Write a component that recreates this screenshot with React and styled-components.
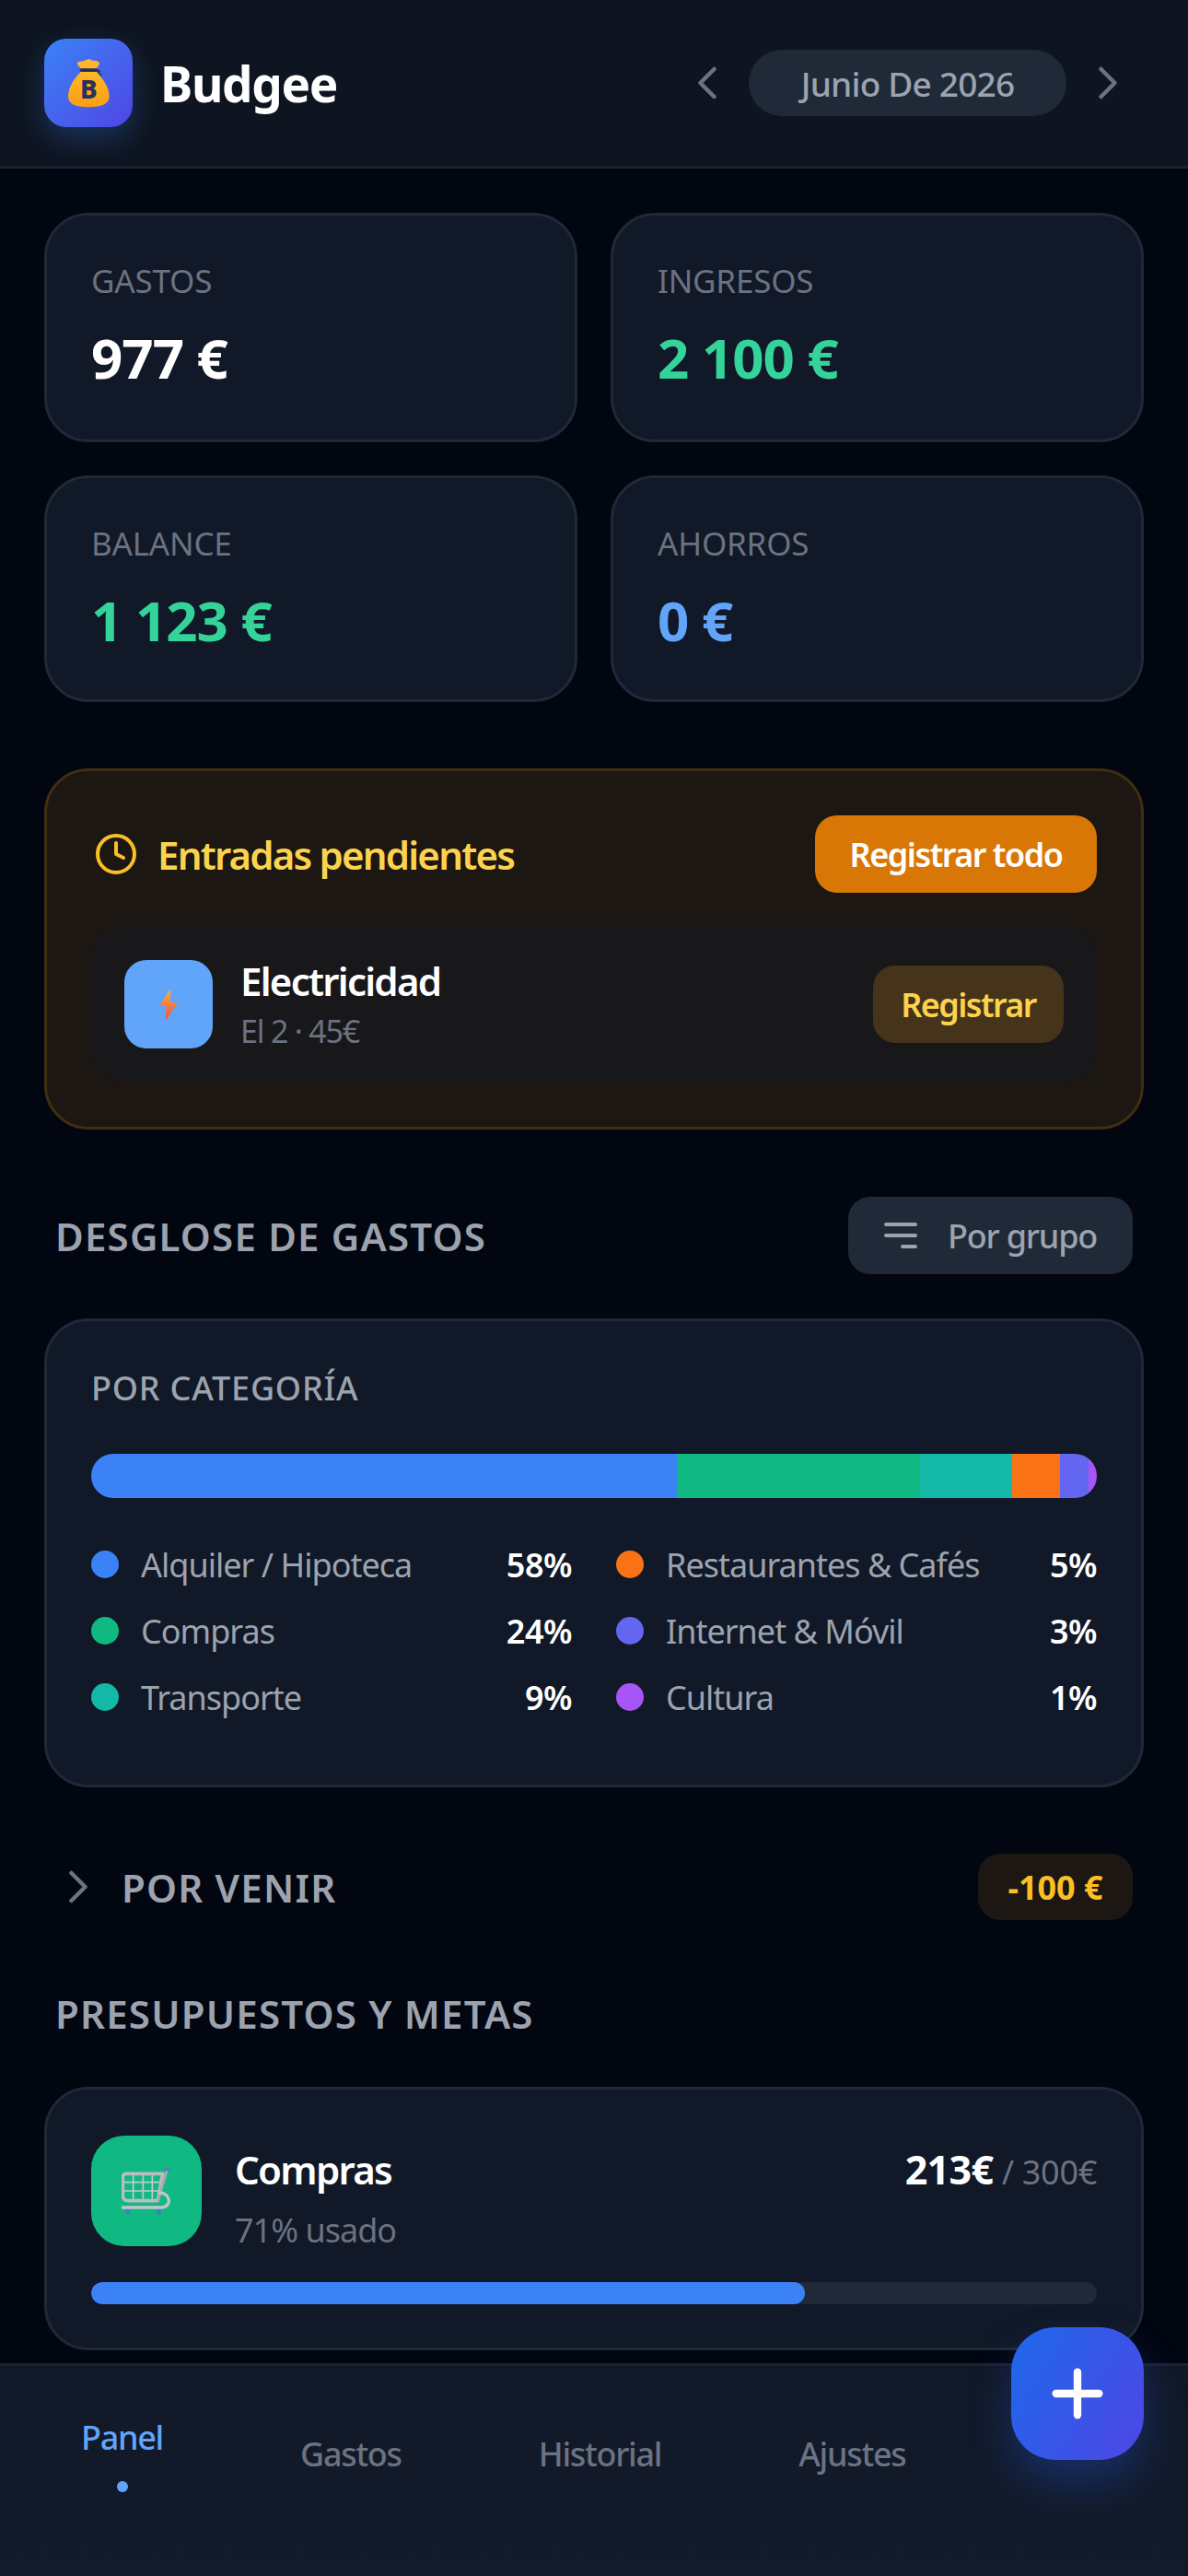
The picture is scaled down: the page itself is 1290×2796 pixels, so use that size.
import React from 'react';
import styled, { createGlobalStyle } from 'styled-components';
import { ChevronLeft, ChevronRight, Clock, Plus } from 'lucide-react';

const Global = createGlobalStyle`
  html, body { margin: 0; padding: 0; background: #020611; }
  * { box-sizing: border-box; }
  body { font-family: "Noto Sans", "Open Sans", sans-serif; }
`;

const Screen = styled.div`
  position: relative;
  width: 1290px;
  height: 2796px;
  display: flex;
  flex-direction: column;
  overflow: hidden;
  background: #020611;
`;

const Header = styled.header`
  flex: none;
  height: 183px;
  padding: 0 48px;
  display: flex;
  align-items: center;
  justify-content: space-between;
  background: #0e1521;
  border-bottom: 3px solid #1a2230;
`;

const Brand = styled.div`
  display: flex;
  align-items: center;
  gap: 30px;
`;

const LogoTile = styled.div`
  width: 96px;
  height: 96px;
  border-radius: 24px;
  display: flex;
  align-items: center;
  justify-content: center;
  background: linear-gradient(135deg, #3b82f6, #4f46e5);
  box-shadow: 0 12px 30px rgba(59, 130, 246, 0.28);
`;

const BrandName = styled.h1`
  margin: 0;
  font-size: 53px;
  font-weight: 700;
  color: #ffffff;
  letter-spacing: -1.3px;
`;

const MonthPager = styled.div`
  display: flex;
  align-items: center;
  gap: 15px;
  margin-right: 9px;
  color: #6b7280;
`;

const MonthPill = styled.div`
  width: 345px;
  height: 72px;
  border-radius: 36px;
  background: #1f2937;
  color: #9ca3af;
  font-size: 37px;
  font-weight: 500;
  letter-spacing: -0.8px;
  display: flex;
  align-items: center;
  justify-content: center;
`;

const Content = styled.main`
  flex: 1;
  min-height: 0;
  padding: 48px 48px 0;
  display: flex;
  flex-direction: column;
`;

const StatGrid = styled.section`
  display: grid;
  grid-template-columns: 1fr 1fr;
  grid-template-rows: 249px 246px;
  gap: 36px;
`;

const Card = styled.div`
  background: #111827;
  border: 3px solid #1f2937;
  border-radius: 48px;
`;

const StatCard = styled(Card)`
  padding: 48px 48px 0;
`;

const StatLabel = styled.div`
  font-size: 35px;
  line-height: 46px;
  letter-spacing: -0.2px;
  color: #6b7280;
  text-transform: uppercase;
`;

const StatValue = styled.div`
  margin-top: 21px;
  font-size: 60px;
  line-height: 78px;
  font-weight: 700;
  letter-spacing: -1px;
  color: ${p => p.$color};
`;

const PendingPanel = styled.section`
  margin-top: 72px;
  height: 392px;
  padding: 48px;
  background: #1c1712;
  border: 3px solid #402e12;
  border-radius: 48px;
`;

const PendingHead = styled.div`
  display: flex;
  align-items: center;
  justify-content: space-between;
`;

const PendingTitle = styled.div`
  display: flex;
  align-items: center;
  gap: 21px;
  padding-left: 3px;
  font-size: 42px;
  font-weight: 600;
  letter-spacing: -1.8px;
  color: #fcd34d;
  svg { color: #fbbf24; }
`;

const SolidButton = styled.button`
  height: 84px;
  width: 306px;
  border: 0;
  border-radius: 24px;
  background: #d97706;
  color: #fff;
  font: 600 36px "Noto Sans", sans-serif;
  letter-spacing: -1.5px;
`;

const PendingItem = styled.div`
  margin-top: 36px;
  height: 170px;
  padding: 0 36px;
  border-radius: 36px;
  background: #18181b;
  display: flex;
  align-items: center;
`;

const IconTile = styled.div`
  flex: none;
  width: ${p => p.$size}px;
  height: ${p => p.$size}px;
  border-radius: ${p => p.$radius}px;
  background: ${p => p.$bg};
  display: flex;
  align-items: center;
  justify-content: center;
`;

const ItemText = styled.div`
  flex: 1;
  margin-left: 30px;
  margin-top: -3px;
`;

const ItemName = styled.div`
  font-size: 42px;
  line-height: 54px;
  font-weight: 600;
  letter-spacing: -1.75px;
  color: #fff;
`;

const ItemMeta = styled.div`
  margin-top: 6px;
  font-size: 34px;
  line-height: 42px;
  letter-spacing: -1.2px;
  color: #6b7280;
`;

const SoftButton = styled.button`
  width: 207px;
  height: 84px;
  border: 0;
  border-radius: 24px;
  background: #45331a;
  color: #fcd34d;
  font: 600 36px "Noto Sans", sans-serif;
  letter-spacing: -1.6px;
`;

const SectionHead = styled.div`
  margin-top: 73px;
  padding: 0 12px;
  display: flex;
  align-items: center;
  justify-content: space-between;
`;

const SectionTitle = styled.h2`
  margin: 0;
  font-size: 42px;
  font-weight: 600;
  letter-spacing: 1.2px;
  color: #9ca3af;
  text-transform: uppercase;
`;

const GroupButton = styled.button`
  width: 309px;
  height: 84px;
  border: 0;
  border-radius: 24px;
  background: #1f2937;
  color: #9ca3af;
  font: 500 36px "Noto Sans", sans-serif;
  letter-spacing: -1.2px;
  display: flex;
  align-items: center;
  justify-content: center;
  gap: 33px;
  padding-left: 6px;
`;

const BreakdownCard = styled(Card)`
  margin-top: 48px;
  height: 509px;
  padding: 51px 48px 0;
`;

const CardTitle = styled.div`
  font-size: 36px;
  line-height: 44px;
  font-weight: 500;
  letter-spacing: 0.8px;
  color: #9ca3af;
`;

const StackBar = styled.div`
  margin-top: 49px;
  height: 48px;
  border-radius: 24px;
  overflow: hidden;
  display: flex;
`;

const StackPart = styled.div`
  height: 100%;
  background: ${p => p.$color};
`;

const Legend = styled.div`
  margin-top: 36px;
  display: grid;
  grid-template-columns: 1fr 1fr;
  grid-auto-flow: column;
  grid-template-rows: repeat(3, 72px);
  column-gap: 48px;
`;

const LegendRow = styled.div`
  display: flex;
  align-items: center;
  font-size: 36px;
`;

const Dot = styled.span`
  flex: none;
  width: 30px;
  height: 30px;
  margin-right: 24px;
  border-radius: 50%;
  background: ${p => p.$color};
`;

const LegendName = styled.span`
  flex: 1;
  letter-spacing: -1px;
  color: #9ca3af;
`;

const LegendPct = styled.span`
  font-weight: 600;
  letter-spacing: -0.5px;
  color: #fff;
`;

const UpcomingRow = styled.div`
  margin-top: 72px;
  height: 72px;
  padding: 0 12px 0 7px;
  display: flex;
  align-items: center;
`;

const UpcomingTitle = styled(SectionTitle)`
  flex: 1;
  margin-left: 17px;
`;

const AmountChip = styled.div`
  width: 168px;
  height: 72px;
  border-radius: 24px;
  background: #1c1712;
  color: #fbbf24;
  font-size: 36px;
  font-weight: 700;
  display: flex;
  align-items: center;
  justify-content: center;
`;

const BudgetHead = styled(SectionHead)`
  margin-top: 73px;
`;

const BudgetCard = styled(Card)`
  margin-top: 51px;
  flex: none;
  height: 286px;
  padding: 50px 48px 0;
`;

const BudgetTop = styled.div`
  height: 120px;
  display: flex;
  align-items: flex-start;
`;

const BudgetText = styled.div`
  flex: 1;
  margin-left: 36px;
`;

const BudgetName = styled.div`
  margin-top: 10px;
  font-size: 42px;
  line-height: 54px;
  font-weight: 600;
  letter-spacing: -1.7px;
  color: #fff;
`;

const BudgetUsed = styled.div`
  margin-top: 17px;
  font-size: 36px;
  line-height: 44px;
  letter-spacing: -1px;
  color: #6b7280;
`;

const BudgetAmount = styled.div`
  margin-top: 10px;
  line-height: 54px;
  font-size: 36px;
  letter-spacing: -0.3px;
  color: #6b7280;
  strong {
    font-size: 43px;
    font-weight: 700;
    letter-spacing: -0.6px;
    color: #fff;
  }
`;

const Track = styled.div`
  margin-top: 39px;
  height: 24px;
  border-radius: 12px;
  background: #1f2937;
  overflow: hidden;
`;

const Fill = styled.div`
  height: 100%;
  border-radius: 12px;
  background: #3b82f6;
`;

const BottomNav = styled.nav`
  position: relative;
  flex: none;
  height: 231px;
  padding: 0 0 37px 88px;
  display: flex;
  align-items: center;
  gap: 149px;
  background: linear-gradient(180deg, #111827, #131a2b);
  border-top: 3px solid #1a2230;
`;

const NavItem = styled.div`
  display: flex;
  flex-direction: column;
  align-items: center;
  font-size: 36px;
  line-height: 48px;
  font-weight: 500;
  letter-spacing: -1.3px;
  color: ${p => (p.$active ? '#60a5fa' : '#6b7280')};
`;

const NavDot = styled.span`
  margin-top: 23px;
  width: 12px;
  height: 12px;
  border-radius: 50%;
  background: #60a5fa;
`;

const Fab = styled.button`
  position: absolute;
  right: 48px;
  bottom: 126px;
  width: 144px;
  height: 144px;
  border: 0;
  border-radius: 48px;
  background: linear-gradient(120deg, #2563eb 15%, #4f46e5);
  color: #fff;
  display: flex;
  align-items: center;
  justify-content: center;
  box-shadow: 0 24px 48px rgba(37, 99, 235, 0.3);
`;

const MoneyBag = () => (
  <svg width="45" height="54" viewBox="0 0 135 162">
    <defs>
      <linearGradient id="bagBody" x1="0" y1="0" x2="0" y2="1">
        <stop offset="0" stopColor="#ffb627" />
        <stop offset="1" stopColor="#f8a012" />
      </linearGradient>
    </defs>
    <path d="M46 42C40 30 28 24 30 16C32 10 44 12 50 10C56 4 72 0 78 8C86 8 100 8 102 16C102 26 92 32 88 42Z" fill="#fcb62d" />
    <path d="M42 44C24 62 0 92 0 124C0 150 22 160 66 160C110 160 134 150 134 124C134 92 108 62 92 44Z" fill="url(#bagBody)" />
    <rect x="38" y="34" width="58" height="11" rx="5" fill="#23305c" />
    <path d="M92 40L108 56M94 38L104 44" stroke="#23305c" strokeWidth="4" strokeLinecap="round" />
    <text x="67" y="132" textAnchor="middle" fontFamily="Noto Sans, sans-serif" fontSize="84" fontWeight="800" fill="#27325c">B</text>
  </svg>
);

const Bolt = () => (
  <svg width="20" height="35" viewBox="0 0 60 105">
    <defs>
      <linearGradient id="boltFill" x1="0" y1="0" x2="0" y2="1">
        <stop offset="0" stopColor="#fbb040" />
        <stop offset="1" stopColor="#ef4f40" />
      </linearGradient>
    </defs>
    <path d="M36 0L0 57H22L21 104L59 46H37Z" fill="url(#boltFill)" />
  </svg>
);

const Cart = () => (
  <svg width="54" height="52" viewBox="0 0 162 156" fill="none">
    <path d="M38 24V104M70 24V104M100 24V104M6 50H128M6 78H122" stroke="#c8c8ce" strokeWidth="5" />
    <path d="M16 22H134L118 110H22Q4 110 4 92V34Q4 22 16 22Z" stroke="#bcbcc3" strokeWidth="11" strokeLinejoin="round" />
    <path d="M148 8L118 112" stroke="#a9a9b0" strokeWidth="9" />
    <path d="M124 84C160 84 166 132 128 132H4" stroke="#c4c4cb" strokeWidth="10" strokeLinecap="round" />
    <ellipse cx="148" cy="7" rx="11" ry="6" fill="#4c80bd" />
    <circle cx="20" cy="146" r="8" fill="#4a78c8" />
    <circle cx="122" cy="146" r="8" fill="#4a78c8" />
  </svg>
);

const SortLines = () => (
  <svg width="36" height="28" viewBox="0 0 36 28" stroke="#9ca3af" strokeWidth="4" strokeLinecap="round">
    <path d="M2 2H34M2 14H34M20 26H34" />
  </svg>
);

const STATS = [
  { label: 'Gastos', value: '977 €', color: '#ffffff' },
  { label: 'Ingresos', value: '2 100 €', color: '#34d399' },
  { label: 'Balance', value: '1 123 €', color: '#34d399' },
  { label: 'Ahorros', value: '0 €', color: '#60a5fa' },
];

const SEGMENTS = [
  { name: 'Alquiler / Hipoteca', pct: '58%', width: 58.2, color: '#3b82f6' },
  { name: 'Compras', pct: '24%', width: 24.2, color: '#10b981' },
  { name: 'Transporte', pct: '9%', width: 9.2, color: '#14b8a6' },
  { name: 'Restaurantes & Cafés', pct: '5%', width: 4.7, color: '#f97316' },
  { name: 'Internet & Móvil', pct: '3%', width: 2.9, color: '#6366f1' },
  { name: 'Cultura', pct: '1%', width: 0.8, color: '#a855f7' },
];

export default function App() {
  return (
    <Screen>
      <Global />
      <Header>
        <Brand>
          <LogoTile><MoneyBag /></LogoTile>
          <BrandName>Budgee</BrandName>
        </Brand>
        <MonthPager>
          <ChevronLeft size={60} strokeWidth={1.8} />
          <MonthPill>Junio De 2026</MonthPill>
          <ChevronRight size={60} strokeWidth={1.8} />
        </MonthPager>
      </Header>

      <Content>
        <StatGrid>
          {STATS.map(s => (
            <StatCard key={s.label}>
              <StatLabel>{s.label}</StatLabel>
              <StatValue $color={s.color}>{s.value}</StatValue>
            </StatCard>
          ))}
        </StatGrid>

        <PendingPanel>
          <PendingHead>
            <PendingTitle>
              <Clock size={48} strokeWidth={2} />
              Entradas pendientes
            </PendingTitle>
            <SolidButton>Registrar todo</SolidButton>
          </PendingHead>
          <PendingItem>
            <IconTile $size={96} $radius={24} $bg="#60a5fa"><Bolt /></IconTile>
            <ItemText>
              <ItemName>Electricidad</ItemName>
              <ItemMeta>El 2 · 45€</ItemMeta>
            </ItemText>
            <SoftButton>Registrar</SoftButton>
          </PendingItem>
        </PendingPanel>

        <SectionHead>
          <SectionTitle>Desglose de gastos</SectionTitle>
          <GroupButton><SortLines />Por grupo</GroupButton>
        </SectionHead>

        <BreakdownCard>
          <CardTitle>POR CATEGORÍA</CardTitle>
          <StackBar>
            {SEGMENTS.map(s => (
              <StackPart key={s.name} $color={s.color} style={{ width: `${s.width}%` }} />
            ))}
          </StackBar>
          <Legend>
            {SEGMENTS.map(s => (
              <LegendRow key={s.name}>
                <Dot $color={s.color} />
                <LegendName>{s.name}</LegendName>
                <LegendPct>{s.pct}</LegendPct>
              </LegendRow>
            ))}
          </Legend>
        </BreakdownCard>

        <UpcomingRow>
          <ChevronRight size={60} strokeWidth={1.8} color="#6b7280" />
          <UpcomingTitle>Por venir</UpcomingTitle>
          <AmountChip>-100 €</AmountChip>
        </UpcomingRow>

        <BudgetHead>
          <SectionTitle>Presupuestos y metas</SectionTitle>
        </BudgetHead>

        <BudgetCard>
          <BudgetTop>
            <IconTile $size={120} $radius={36} $bg="#10b981"><Cart /></IconTile>
            <BudgetText>
              <BudgetName>Compras</BudgetName>
              <BudgetUsed>71% usado</BudgetUsed>
            </BudgetText>
            <BudgetAmount><strong>213€</strong> / 300€</BudgetAmount>
          </BudgetTop>
          <Track><Fill style={{ width: '71%' }} /></Track>
        </BudgetCard>
      </Content>

      <BottomNav>
        <NavItem $active>Panel<NavDot /></NavItem>
        <NavItem>Gastos</NavItem>
        <NavItem>Historial</NavItem>
        <NavItem>Ajustes</NavItem>
      </BottomNav>
      <Fab><Plus size={80} strokeWidth={2.5} /></Fab>
    </Screen>
  );
}
